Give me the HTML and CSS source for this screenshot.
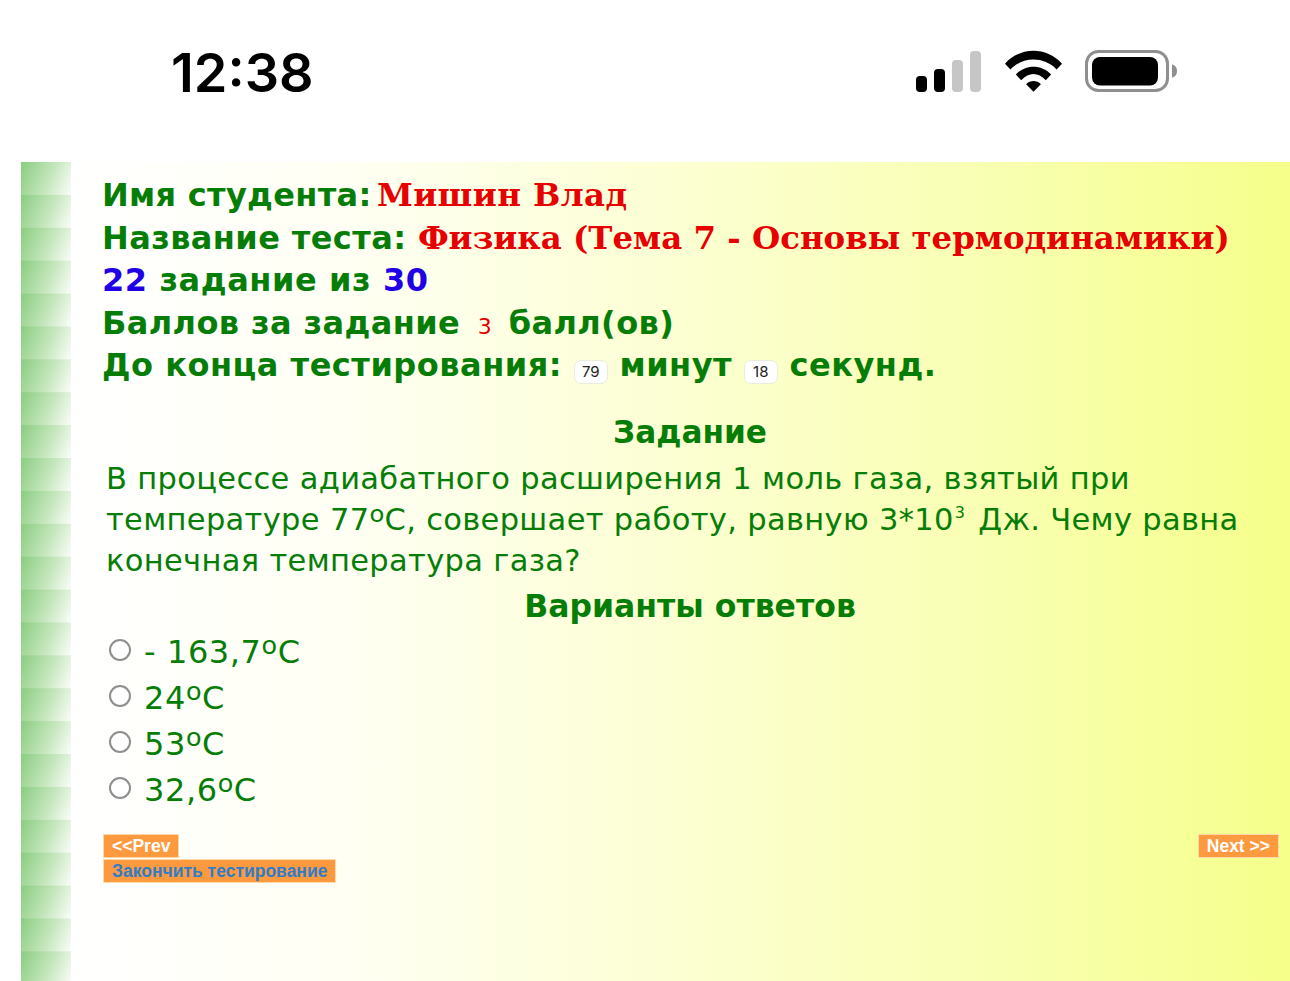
FILE: index.html
```html
<!DOCTYPE html>
<html lang="ru">
<head>
<meta charset="utf-8">
<title>Тест</title>
<link rel="stylesheet" href="styles.css">
</head>
<body>
<header class="status">
  <span class="clock">12:38</span>
  <div class="status-icons">
    <svg class="sig" width="66" height="41" viewBox="0 0 66 41"><rect x="0" y="25" width="11" height="16" rx="4" fill="#000"/><rect x="18" y="18" width="11" height="23" rx="4" fill="#000"/><rect x="36" y="9" width="11" height="32" rx="4" fill="#c6c6c6"/><rect x="54" y="0" width="11" height="41" rx="4" fill="#c6c6c6"/></svg>
    <svg class="wifi" width="57" height="42" viewBox="0 0 58 42"><path d="M0 13.500C16-4 42-4 58 13.500l-5.500 6C40 6 18 6 5.500 19.500z" fill="#000"/><path d="M11 24.500C21 14 37 14 47 24.500l-5.500 6C33.500 22 24.500 22 16.500 30.500z" fill="#000"/><path d="M21.500 34.500C25.500 30 32.500 30 36.500 34.500L29 42z" fill="#000"/></svg>
    <svg class="batt" width="92" height="42" viewBox="0 0 92 42"><rect x="1.500" y="1.500" width="81" height="39" rx="12" fill="none" stroke="#8f8f8f" stroke-width="3"/><rect x="7" y="7" width="66" height="28.500" rx="8" fill="#000"/><path d="M87 14.500c3 .5 5 3 5 6.500s-2 6-5 6.500z" fill="#8f8f8f"/></svg>
  </div>
</header>
<main class="page">
  <div class="info">
    <div class="line line-first">Имя студента: <span class="name">Мишин Влад</span></div>
    <div class="line">Название теста: <span class="name">Физика (Тема 7 - Основы термодинамики)</span></div>
    <div class="line line-wide"><span class="num">22</span> задание из <span class="num">30</span></div>
    <div class="line">Баллов за задание <span class="points">3</span> балл(ов)</div>
    <div class="line line-time">До конца тестирования: <span class="timer">79</span> минут <span class="timer">18</span> секунд.</div>
  </div>
  <h2 class="head head-task">Задание</h2>
  <p class="question">В процессе адиабатного расширения 1 моль газа, взятый при температуре 77<span class="deg">º</span>C, совершает работу, равную 3*10<sup>3</sup> Дж. Чему равна конечная температура газа?</p>
  <h2 class="head head-ans">Варианты ответов</h2>
  <div class="answers">
    <label class="answer"><input type="radio" name="a"><span>- 163,7<span class="deg">º</span>C</span></label>
    <label class="answer"><input type="radio" name="a"><span>24<span class="deg">º</span>C</span></label>
    <label class="answer"><input type="radio" name="a"><span>53<span class="deg">º</span>C</span></label>
    <label class="answer"><input type="radio" name="a"><span>32,6<span class="deg">º</span>C</span></label>
  </div>
  <div class="nav">
    <div class="nav-left">
      <a class="btn">&lt;&lt;Prev</a>
      <a class="btn finish">Закончить тестирование</a>
    </div>
    <a class="btn">Next &gt;&gt;</a>
  </div>
</main>
</body>
</html>
```
FILE: styles.css
```css
html, body { margin: 0; padding: 0; background: #fff; }
body { width: 1290px; height: 981px; overflow: hidden; font-family: "DejaVu Sans", sans-serif; }
.status { height: 162px; display: flex; justify-content: space-between; align-items: flex-start; box-sizing: border-box; padding: 0 113px 0 171px; }
.clock { font-family: Inter, "Liberation Sans", sans-serif; font-size: 54px; font-weight: 600; line-height: 54px; margin-top: 46px; color: #000; }
.status-icons { display: flex; align-items: flex-end; gap: 23px; margin-top: 50px; }
.page { margin-left: 21px; height: 819px; box-sizing: border-box; padding: 12px 11px 0 81px; color: #067d06;
  background-image: linear-gradient(112deg, #8acd80 0%, #c4e6bc 55%, #fbfdf9 100%), linear-gradient(90deg, #fff 50px, #fffff4 25%, #f9ffb4 75%, #f5ff8a 100%);
  background-size: 50px 32.900px, 100% 100%;
  background-repeat: repeat-y, no-repeat; }
.line { font-size: 32px; font-weight: 700; line-height: 42.500px; height: 42.500px; white-space: nowrap; letter-spacing: .4px; }
.line-first { letter-spacing: .3px; }
.line-first .name { margin-left: -6px; letter-spacing: .4px; }
.line-wide { letter-spacing: .58px; }
.line-time { letter-spacing: .52px; }
.name { font-family: "DejaVu Serif", serif; color: #e60000; font-size: 32.400px; letter-spacing: 0; line-height: 0; }
.num { color: #2200e6; }
.points { color: #e60000; font-weight: 400; font-size: 22px; padding: 0 5px 0 6px; }
.timer { display: inline-block; font-family: Inter, sans-serif; font-size: 15px; font-weight: 400; letter-spacing: 0; color: #222; background: #fff; border: 1px solid #ececdc; border-radius: 7px; line-height: 22px; width: 34px; box-sizing: border-box; text-align: center; vertical-align: -1px; }
.head { margin: 0 1px 0 0; text-align: center; font-size: 31.200px; font-weight: 700; line-height: 42px; }
.head-task { margin-top: 24px; }
.question { margin: 5px 0 0 4px; font-size: 30.500px; line-height: 41px; letter-spacing: .33px; }
.question sup { font-size: 16px; line-height: 0; margin: 0 3px 0 1px; }
.deg { font-family: "Open Sans", sans-serif; font-size: 1.300em; line-height: 0; vertical-align: -.18em; }
.head-ans { margin-top: 4px; font-size: 31.500px; }
.answers { display: flex; flex-direction: column; margin-top: 2px; }
.answer { display: flex; align-items: flex-start; height: 46.300px; font-size: 32px; line-height: 46px; letter-spacing: .6px; }
.answer input { appearance: none; width: 22px; height: 22px; margin: 10px 13px 0 7px; border: 2px solid #8e8e8e; border-radius: 50%; background: #fff; box-sizing: border-box; }
.nav { display: flex; justify-content: space-between; align-items: flex-start; margin-top: 20px; }
.nav-left { display: flex; flex-direction: column; align-items: flex-start; gap: 1px; margin-left: 1px; }
.btn { display: block; background: #fd9a3f; color: #fff; font-family: "Liberation Sans", sans-serif; font-weight: 700; font-size: 17.500px; line-height: 22px; padding: 0 8px; border: 1px solid #ffd9a8; }
.finish { color: #2f7dc8; }
```
